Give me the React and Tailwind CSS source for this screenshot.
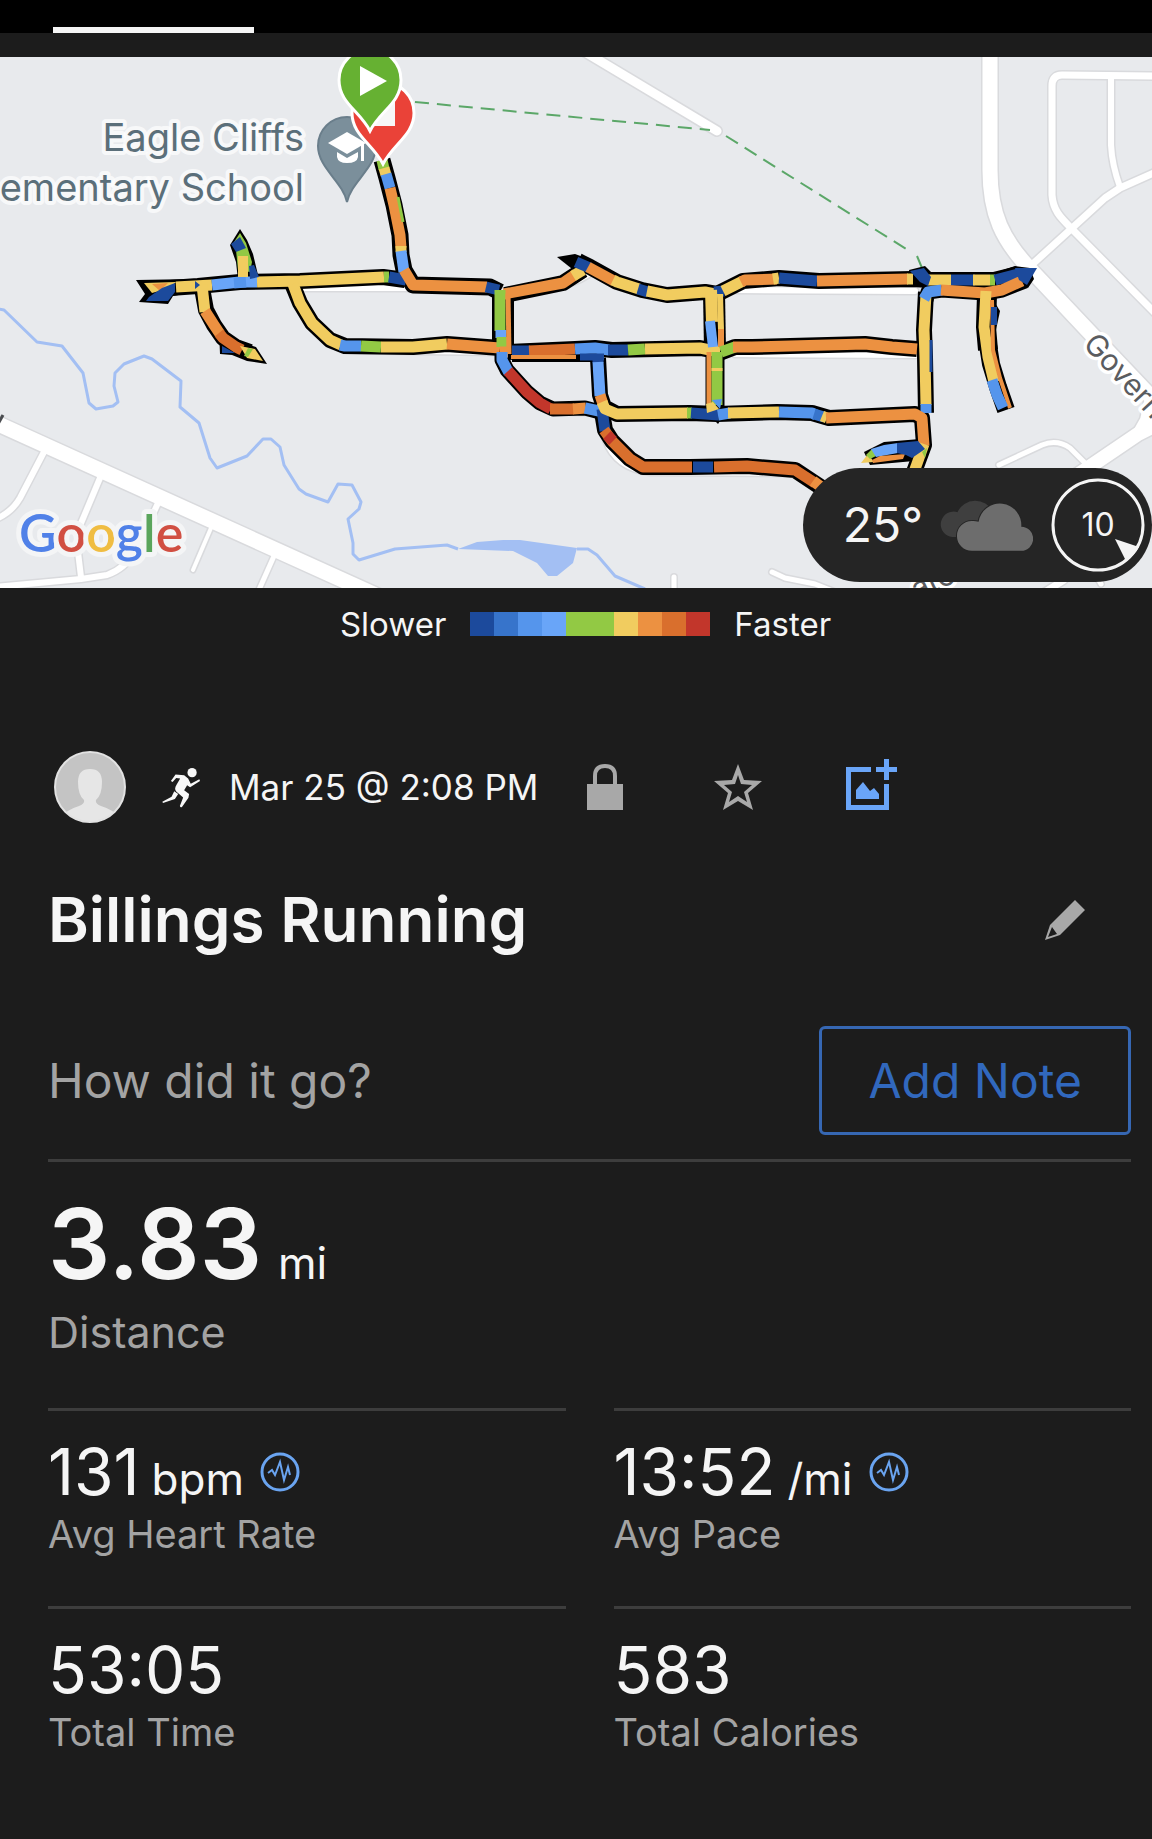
import React from "react";

const NAVY = "#1c4a9c";
const MID = "#3774cb";
const BLUE = "#5595ec";
const SKY = "#69a5f8";
const GREEN = "#92c944";
const YELLOW = "#f1cc5f";
const ORANGE = "#ec9141";
const RUST = "#d96f2d";
const RED = "#c2362b";

const LEGEND = [
  "bg-[#1c4a9c]",
  "bg-[#3774cb]",
  "bg-[#5595ec]",
  "bg-[#69a5f8]",
  "bg-[#92c944]",
  "bg-[#92c944]",
  "bg-[#f1cc5f]",
  "bg-[#ec9141]",
  "bg-[#d96f2d]",
  "bg-[#c2362b]",
];

/* Streets: [width, path] */
const ROADS = [
  [9, "M580 49 L717 131"],
  [15, "M990 50 L990 170 C990 215 1003 240 1029 268 L1095 338 L1156 402"],
  [7, "M1156 76 L1062 75 Q1052 75 1052 86 L1052 195 C1053 210 1060 217 1071 228 L1156 314"],
  [6, "M1111 78 L1111 145 Q1112 165 1120 187"],
  [7, "M1025 271 L1105 198 L1120 188 L1156 172"],
  [14, "M1156 425 L1138 434 L1085 470 L1040 500"],
  [10, "M1150 398 L1145 420 L1136 436"],
  [5, "M999 465 L1042 445 Q1057 439 1070 448 L1090 468"],
  [5, "M772 572 L785 578 L815 584 L835 592"],
  [7, "M1045 592 L1064 580"],
  [5, "M1096 575 L1101 584"],
  [5, "M674 577 L674 592"],
  [15, "M-4 423 L380 597"],
  [6, "M45 450 L20 498 Q12 512 -4 519"],
  [6, "M100 478 L79 528 Q77 540 78 552 L81 577"],
  [6, "M158 503 L148 525 L134 552 Q126 568 107 575 L81 579 L-4 587"],
  [4, "M211 528 L193 570"],
  [5, "M274 556 L258 592"],
  [6, "M298 288 L420 288 L500 291"],
  [6, "M560 287 L580 279 L594 271"],
  [6, "M735 290 L915 291"],
  [6, "M298 300 Q306 332 345 350 L500 352"],
  [6, "M735 354 L915 355"],
  [6, "M508 372 L535 402 Q548 413 590 412"],
  [6, "M606 440 Q616 468 650 472 L790 473"],
];

/* Black casing under the pace-coloured run: [width, path] */
const CASING = [
  [16, "M170 288 L198 286 L240 282 L300 281 L383 277 L405 280"],
  [16, "M202 288 L206 310 L214 325 L223 338 L236 347 L250 352"],
  [16, "M293 286 L300 303 L312 323 L330 340 L345 346 L413 347 L447 344 L500 348"],
  [17, "M382 160 L387 178 L394 205 L400 235 L401 255 L404 270 L413 285 L490 287 L500 292"],
  [22, "M503 290 L503 352"],
  [16, "M505 295 L563 283 L583 270"],
  [16, "M578 261 L590 267 L617 282 L642 290 L667 295 L705 292 L717 294 L743 281 L779 278 L819 281 L912 279 L930 280 L994 280 L1018 274"],
  [15, "M926 300 L928 292 L942 290 L985 293 L1002 290 L1025 281"],
  [16, "M926 292 L924 330 L925 357 L926 413"],
  [20, "M987 294 L986 327 L988 350"],
  [18, "M988 345 L991 364 L998 387 L1006 410"],
  [16, "M508 352 L575 349 L595 348 L612 350 L700 348 L722 352 L735 347 L752 347 L865 344 L892 347 L917 349"],
  [18, "M512 353 L600 353"],
  [22, "M714 292 L715 350"],
  [19, "M715 350 L715 412"],
  [15, "M502 350 L502 360 L507 370 L527 392 L540 403 L553 409 L585 408 L600 412"],
  [16, "M598 358 L600 395 L604 407 L617 414 L690 413 L717 414 L777 412 L812 413 L829 418 L915 414 L922 418 L924 445 L914 472"],
  [16, "M602 412 L605 430 L612 441 L630 459 L643 467 L690 467 L747 466 L795 470 L822 488"],
];

const CASING_SHAPES = [
  "M136 280 L195 279 L195 292 L173 296 L168 304 L139 302 L145 294 Z",
  "M240 229 L247 240 L253 254 L258 275 L238 280 L236 262 L230 245 Z",
  "M219 330 L220 354 L232 355 L247 361 L267 364 L256 347 L240 342 Z",
  "M557 257 L575 254 L586 258 L576 272 Z",
  "M909 270 L925 266 L934 275 L934 288 L912 285 Z",
  "M994 273 L1015 266 L1030 268 L1034 279 L1028 288 L1018 282 Z",
  "M992 298 L1000 311 L996 330 L985 325 Z",
  "M864 452 L884 442 L920 439 L926 449 L914 461 L870 465 Z",
  "M706 412 L718 424 L726 412 Z",
];

/* Pace-coloured stretches: [colour, path, width] */
const PACE = [
  [YELLOW, "M176 287 L212 285"],
  [SKY, "M212 285 L240 282 L257 282"],
  [BLUE, "M234 283 L246 282"],
  [YELLOW, "M257 282 L300 281 L384 277"],
  [GREEN, "M384 277 L389 277"],
  [NAVY, "M389 277 L406 280"],
  [YELLOW, "M202 285 L205 312"],
  [ORANGE, "M205 311 L214 325 L220 334"],
  [RUST, "M219 333 L223 338 L236 347 L242 350"],
  [YELLOW, "M293 284 L300 303 L312 323 L330 340 L341 345"],
  [BLUE, "M340 345 L345 346 L361 346"],
  [GREEN, "M361 346 L381 347"],
  [YELLOW, "M381 347 L413 347 L447 344"],
  [ORANGE, "M447 344 L500 348"],
  [GREEN, "M382 160 L384 169"],
  [YELLOW, "M384 168 L386 175"],
  [BLUE, "M386 174 L390 188"],
  [ORANGE, "M390 188 L394 205 L400 235 L401 248"],
  [YELLOW, "M401 246 L401 252"],
  [GREEN, "M398 197 L403 222", 3],
  [SKY, "M401 251 L404 272"],
  [ORANGE, "M404 270 L413 285 L487 287"],
  [NAVY, "M486 287 L499 290"],
  [ORANGE, "M504 294 L563 283 L576 274"],
  [YELLOW, "M573 276 L583 270"],
  [NAVY, "M576 262 L590 268"],
  [ORANGE, "M588 267 L614 281"],
  [YELLOW, "M613 280 L617 282 L639 289"],
  [NAVY, "M638 289 L648 292"],
  [YELLOW, "M647 291 L667 295 L705 292 L715 294"],
  [NAVY, "M714 292 L724 291"],
  [YELLOW, "M723 291 L743 281"],
  [ORANGE, "M741 282 L745 280 L777 279"],
  [YELLOW, "M773 279 L779 278"],
  [NAVY, "M779 278 L817 281"],
  [ORANGE, "M817 281 L908 279"],
  [YELLOW, "M907 279 L913 279"],
  [YELLOW, "M928 280 L951 280"],
  [NAVY, "M951 280 L975 280"],
  [YELLOW, "M973 280 L990 280"],
  [GREEN, "M990 280 L995 280"],
  [NAVY, "M995 280 L1018 274"],
  [YELLOW, "M926 294 L924 330 L925 357 L926 405"],
  [BLUE, "M924 299 L928 292 L942 290"],
  [ORANGE, "M941 290 L985 293 L1002 290 L1022 281"],
  [BLUE, "M926 404 L926 413"],
  [NAVY, "M931 340 L931 372", 3],
  [YELLOW, "M986 291 L984 327 L988 357 L994 382", 11],
  [ORANGE, "M992 300 L993 350 L1000 378 L1010 408", 4],
  [BLUE, "M992 380 L997 395 L1003 408", 11],
  [NAVY, "M994 307 L994 325", 6],
  [GREEN, "M500 290 L500 331", 11],
  [SKY, "M501 330 L501 338", 11],
  [GREEN, "M502 337 L502 347", 11],
  [ORANGE, "M508 294 L509 354", 5],
  [NAVY, "M512 351 L530 351"],
  [RUST, "M529 351 L575 349"],
  [BLUE, "M575 349 L595 348 L609 350"],
  [NAVY, "M608 350 L628 350"],
  [GREEN, "M628 350 L645 349"],
  [YELLOW, "M645 349 L700 348 L720 352"],
  [ORANGE, "M511 357 L576 357", 4],
  [NAVY, "M580 357 L604 357", 7],
  [YELLOW, "M711 290 L712 322", 12],
  [YELLOW, "M720 294 L721 330", 6],
  [SKY, "M710 321 L713 347", 10],
  [ORANGE, "M721 329 L721 347", 6],
  [ORANGE, "M709 352 L709 404", 5],
  [GREEN, "M717 352 L717 405", 11],
  [YELLOW, "M717 368 L717 371", 11],
  [GREEN, "M721 352 L735 347"],
  [ORANGE, "M733 347 L752 347 L865 344 L892 347 L917 349"],
  [ORANGE, "M500 352 L508 352", 11],
  [BLUE, "M502 352 L502 360 L509 373"],
  [RED, "M508 371 L527 392 L540 403 L551 409"],
  [RUST, "M550 409 L574 409"],
  [ORANGE, "M573 409 L586 408"],
  [BLUE, "M585 408 L599 411"],
  [NAVY, "M598 355 L598 363"],
  [SKY, "M598 362 L600 396"],
  [ORANGE, "M600 395 L603 404"],
  [NAVY, "M602 409 L605 431"],
  [YELLOW, "M602 402 L605 409 L617 414 L688 413"],
  [GREEN, "M687 413 L692 413"],
  [NAVY, "M691 413 L719 415"],
  [BLUE, "M718 415 L730 413"],
  [YELLOW, "M728 413 L779 412"],
  [BLUE, "M779 412 L812 413 L816 415"],
  [MID, "M814 414 L824 417"],
  [YELLOW, "M822 416 L827 418"],
  [ORANGE, "M826 418 L915 414 L922 418 L924 446"],
  [YELLOW, "M924 444 L914 472"],
  [RUST, "M604 430 L612 441 L630 459 L643 467 L692 467"],
  [RED, "M607 435 L613 441"],
  [NAVY, "M693 467 L713 467"],
  [RUST, "M714 467 L747 466 L795 470 L815 483"],
  [ORANGE, "M813 481 L824 489"],
];

const PACE_SHAPES = [
  [YELLOW, "M144 283 L176 282 L170 288 L152 293 Z"],
  [ORANGE, "M152 284 L168 283 L160 291 Z"],
  [NAVY, "M149 297 L162 288 L175 283 L175 292 L168 301 L146 301 Z"],
  [NAVY, "M195 281 L200 285 L195 289 Z"],
  [GREEN, "M240 233 L246 243 L252 262 L250 272 L238 270 L236 250 L234 242 Z"],
  [NAVY, "M231 244 L240 237 L246 248 L236 252 Z"],
  [YELLOW, "M238 256 L248 256 L248 277 L238 277 Z"],
  [NAVY, "M249 266 L254 265 L259 277 L250 279 Z"],
  [NAVY, "M222 346 L235 353 L222 353 Z"],
  [YELLOW, "M240 346 L255 349 L263 361 L247 358 Z"],
  [GREEN, "M248 348 L253 349 L248 357 L244 356 Z"],
  [NAVY, "M910 271 L924 268 L931 277 L928 286 L920 282 Z"],
  [NAVY, "M1015 268 L1037 268 L1027 285 L1019 280 Z"],
  [YELLOW, "M861 463 L868 454 L874 462 Z"],
  [GREEN, "M866 455 L872 449 L876 456 L870 459 Z"],
  [SKY, "M871 449 L884 445 L898 443 L898 453 L876 457 Z"],
  [ORANGE, "M872 460 L880 456 L905 454 L903 459 L873 463 Z"],
  [NAVY, "M897 443 L918 441 L925 449 L912 458 L906 455 L897 453 Z"],
  [GREEN, "M922 452 L927 448 L925 458 Z"],
  [YELLOW, "M706 404 L713 402 L719 409 L707 413 Z"],
  [BLUE, "M712 400 L722 399 L720 409 Z"],
];

function RouteMap() {
  return (
    <svg
      viewBox="0 57 1152 531"
      className="block h-auto w-full bg-[#e8eaed]"
      role="img"
      aria-label="Map of the run coloured by pace"
      fill="none"
    >
      <path
        d="M-2 309 L4 310 L37 342 L62 346 L83 373 L89 403 L96 409 L113 406 L118 402 L114 386 L115 373 L124 364 L144 356 L152 359 L181 381 L180 407 L199 423 L210 458 L217 468 L247 456 L263 439 L271 439 L280 447 L284 465 L299 489 L306 494 L328 502 L338 484 L352 485 L361 502 L359 509 L348 519 L353 543 L353 554 L359 560 L395 549 L447 545 L458 549 M577 549 L588 549 L597 555 L615 576 L645 589"
        stroke="#a3bff3"
        strokeWidth="3"
        strokeLinejoin="round"
      />
      <path
        d="M458 549 L477 542 L503 540 L520 540 L577 548 L573 563 L557 576 L548 576 L537 563 L513 551 Z"
        fill="#a3bff3"
      />
      <g stroke="#d9dadd" strokeLinecap="round" strokeLinejoin="round">
        {ROADS.map(([w, d]) => (
          <path key={d} d={d} strokeWidth={w + 3} />
        ))}
      </g>
      <g stroke="#ffffff" strokeLinecap="round" strokeLinejoin="round">
        {ROADS.map(([w, d]) => (
          <path key={d} d={d} strokeWidth={w} />
        ))}
      </g>
      <g stroke="#5ba768" strokeWidth="2" strokeDasharray="14 8">
        <path d="M415 102 L710 130" />
        <path d="M726 136 L911 252" />
        <path d="M917 256 L922 268" />
      </g>

      <g
        fontFamily="Inter, sans-serif"
        strokeLinejoin="round"
        stroke="#ffffff"
        paintOrder="stroke"
      >
        <g fontSize="38" fill="#5b6f7a" strokeWidth="8" strokeOpacity="0.7" textAnchor="end">
          <text x="304" y="151">Eagle Cliffs</text>
          <text x="304" y="201">ementary School</text>
        </g>
        <g fontSize="30" fill="#5a5c60" strokeWidth="7">
          <text transform="translate(1082 345) rotate(47)">Governors Blvd</text>
          <text transform="translate(917 600) rotate(-25)">ate</text>
        </g>
        <path d="M-2 424 L3 415" stroke="#4a4c50" strokeWidth="3" />
      </g>

      <g
        fontFamily="Lato, sans-serif"
        fontSize="52"
        fontWeight="600"
        stroke="#f4f5f6"
        strokeWidth="10"
        strokeLinejoin="round"
        paintOrder="stroke"
      >
        <text x="19" y="552">
          <tspan fill="#5081e8">G</tspan>
          <tspan fill="#d14f42">o</tspan>
          <tspan fill="#f0bd42">o</tspan>
          <tspan fill="#5081e8">g</tspan>
          <tspan fill="#5aa55c">l</tspan>
          <tspan fill="#d14f42">e</tspan>
        </text>
      </g>

      <path
        d="M347 202 C343 182 318 168 318 146 A29 29 0 0 1 376 146 C376 168 351 182 347 202 Z"
        fill="#7b8f9b"
        stroke="#6a7e8b"
        strokeWidth="2"
      />
      <g fill="#ffffff">
        <path d="M328 143 L347 132 L366 143 L347 154 Z" />
        <path d="M337 152 L347 158 L358 152 V157 Q357 163 347 163 Q338 163 337 157 Z" />
        <path d="M361 144 H364 V161 H361 Z" />
      </g>

      <g stroke="#000000" strokeLinejoin="round">
        {CASING.map(([w, d]) => (
          <path key={d} d={d} strokeWidth={w} />
        ))}
      </g>
      <g fill="#000000">
        {CASING_SHAPES.map((d) => (
          <path key={d} d={d} />
        ))}
      </g>
      <g strokeLinejoin="round">
        {PACE.map(([color, d, w = 11]) => (
          <path key={d} d={d} stroke={color} strokeWidth={w} />
        ))}
      </g>
      {PACE_SHAPES.map(([color, d]) => (
        <path key={d} d={d} fill={color} />
      ))}

      <path
        d="M383 164 C373 144 352 135 352 113 A31 31 0 0 1 414 113 C414 135 393 144 383 164 Z"
        fill="#ea4238"
        stroke="#ffffff"
        strokeWidth="3"
      />
      <path d="M370 99 H395 V126 H370 Z" fill="#f7f7f7" />
      <path
        d="M370 131 C360 111 339 103 339 80 A31 31 0 0 1 401 80 C401 103 380 111 370 131 Z"
        fill="#66b132"
        stroke="#ffffff"
        strokeWidth="3"
      />
      <path d="M360 66 L387 81 L360 96 Z" fill="#ffffff" />
    </svg>
  );
}

function WeatherPill() {
  return (
    <div className="absolute right-0 bottom-[6px] flex h-[114px] items-center rounded-full bg-[#252525] pr-[7px] pl-10 text-[#f5f5f5]">
      <span className="text-[48px] leading-none">25°</span>
      <svg viewBox="0 0 280 160" className="ml-4 h-[54px] w-[94px]" aria-hidden="true">
        <path
          d="M40 116 A38 38 0 1 1 55 42 A58 58 0 0 1 160 40 L130 116 Z"
          fill="#3f3f3f"
        />
        <path
          d="M98 157 A44 44 0 0 1 98 68 Q106 67 118 70 A64 64 0 0 1 245 85 A36 36 0 0 1 244 157 Z"
          fill="#6d6d6d"
          stroke="#252525"
          strokeWidth="6"
          paintOrder="stroke"
        />
      </svg>
      <div className="relative ml-[18px] flex size-[94px] items-center justify-center">
        <svg viewBox="0 0 94 94" className="absolute inset-0 size-full" aria-hidden="true">
          <circle cx="47" cy="47" r="45" fill="none" stroke="#f5f5f5" strokeWidth="3" />
          <path d="M64 61 L88 69 Q83 78 75 83 Z" fill="#f5f5f5" />
        </svg>
        <span className="text-[32px] leading-none">10</span>
      </div>
    </div>
  );
}

function PulseIcon() {
  return (
    <svg viewBox="0 0 40 40" className="size-10" fill="none" stroke="#6aa4f0" aria-hidden="true">
      <circle cx="20" cy="20" r="18" strokeWidth="3" />
      <path d="M8 21 L12 18 L15 23 L20 10 L24 28 L28 15 L30 23" strokeWidth="2" />
    </svg>
  );
}

function Stat({ value, unit, label, pulse }) {
  return (
    <div className="border-t-3 border-[#3d3d3d] pt-[25px] pb-[46px]">
      <dd className="flex h-[72px] items-center text-[64px] leading-[72px] text-[#f5f5f5]">
        <span>
          {value}
          {unit && <span className="ml-3 text-[44px] leading-none">{unit}</span>}
        </span>
        {pulse && (
          <button type="button" aria-label={"Show chart for " + label} className="ml-4">
            <PulseIcon />
          </button>
        )}
      </dd>
      <dt className="text-[38px] leading-[52px] text-[#a3a3a3]">{label}</dt>
    </div>
  );
}

function RunnerIcon() {
  return (
    <svg viewBox="395 108 118 124" className="h-[41px] w-[39px]" fill="#f8f8f8" role="img" aria-label="Running">
      <circle cx="486" cy="125" r="14" />
      <path d="M422 150 L436 131 L462 133 L474 143 L482 159 L508 145 L510 150 L480 169 L471 163 L462 178 L477 190 L475 201 L456 228 Q451 232 449 226 L459 200 L438 182 Q431 174 439 162 L450 143 L438 141 L427 153 Z" />
      <path d="M432 181 L444 190 L434 205 L398 217 L396 213 L424 198 Z" />
    </svg>
  );
}

export default function App() {
  return (
    <div className="min-h-screen bg-[#1c1c1c] pb-8 font-['Inter',sans-serif] text-[#f5f5f5]">
      <div className="flex h-[33px] items-end bg-black pl-[53px]">
        <div className="h-[6px] w-[201px] bg-[#f5f5f5]" />
      </div>

      <section className="relative mt-6 overflow-hidden">
        <RouteMap />
        <WeatherPill />
      </section>

      <main className="pr-[21px] pl-12">
        <div className="flex items-center justify-center gap-6 pt-3 pr-2 text-[33px] leading-[48px]">
          <span>Slower</span>
          <div className="flex h-6">
            {LEGEND.map((c, i) => (
              <div key={i} className={"w-6 " + c} />
            ))}
          </div>
          <span>Faster</span>
        </div>

        <header className="mt-[103px] flex items-center pl-[6px]">
          <svg viewBox="0 0 72 72" className="size-[72px]" role="img" aria-label="Profile picture">
            <defs>
              <clipPath id="avatar">
                <circle cx="36" cy="36" r="35" />
              </clipPath>
            </defs>
            <g clipPath="url(#avatar)">
              <path d="M0 0 H72 V72 H0 Z" fill="#c4c4c4" />
              <path
                d="M24 31 Q24 18 36 18 Q48 18 48 31 Q48 44 42 49 Q41 53 47 55 Q60 59 64 66 V74 H8 V66 Q12 59 25 55 Q31 53 30 49 Q24 44 24 31 Z"
                fill="#e6e6e6"
              />
            </g>
            <circle cx="36" cy="36" r="35" fill="none" stroke="#e2e2e2" strokeWidth="2" />
          </svg>
          <span className="ml-9">
            <RunnerIcon />
          </span>
          <time className="ml-7 text-[35px] leading-[48px]">Mar 25 @ 2:08 PM</time>
          <div className="ml-[42px] flex items-center gap-[83px]">
            <button type="button" aria-label="Privacy" className="size-[50px]">
              <svg viewBox="0 0 50 50" className="size-full" aria-hidden="true">
                <path d="M7 22 H43 V48 H7 Z" fill="#a8a8a8" />
                <path d="M15 23 V14 Q15 4 25 4 Q35 4 35 14 V23" fill="none" stroke="#a8a8a8" strokeWidth="4" />
              </svg>
            </button>
            <button type="button" aria-label="Favorite" className="size-[50px]">
              <svg viewBox="0 0 50 50" className="size-full" aria-hidden="true">
                <path
                  fillRule="evenodd"
                  fill="#a8a8a8"
                  d="M25 2 L31 18 L49 19 L35 31 L40 48 L25 39 L10 48 L15 31 L1 19 L19 18 Z M25 13 L22 22 L11 23 L19 30 L16 40 L25 34 L34 40 L31 30 L39 23 L28 22 Z"
                />
              </svg>
            </button>
            <button type="button" aria-label="Add photo" className="flex h-14 w-[51px] items-start">
              <svg viewBox="0 0 51 51" className="size-[51px]" fill="#6aa5f8" aria-hidden="true">
                <path d="M0 8 H25 V13 H5 V46 H38 V25 H43 V51 H0 Z" />
                <path d="M38 0 H43 V8 H51 V13 H43 V21 H38 V13 H30 V8 H38 Z" />
                <path d="M10 40 V31 L17 23 L24 32 L28 29 L33 35 V40 Z" />
              </svg>
            </button>
          </div>
        </header>

        <div className="mt-[57px] flex items-center justify-between pr-[46px]">
          <h1 className="text-[62px] leading-[80px] font-semibold">Billings Running</h1>
          <button type="button" aria-label="Edit name" className="size-10">
            <svg viewBox="0 0 40 40" className="size-full" fill="#a8a8a8" aria-hidden="true">
              <path
                fillRule="evenodd"
                d="M30 0 L40 10 L15 35 L0 40 L5 25 Z M7 27 L3 37 L12 34 Z"
              />
            </svg>
          </button>
        </div>

        <div className="mt-[66px] mb-6 flex items-center justify-between">
          <p className="text-[48px] leading-[64px] text-[#a3a3a3]">How did it go?</p>
          <button
            type="button"
            className="h-[109px] rounded-md border-3 border-[#3667b3] px-[46px] text-[48px] leading-[64px] text-[#3168bd]"
          >
            Add Note
          </button>
        </div>

        <dl>
          <div className="border-t-3 border-[#3d3d3d] pt-[26px] pb-11">
            <dd className="text-[98px] leading-[112px] font-semibold">
              3.83<span className="ml-4 text-[44px] leading-none font-normal">mi</span>
            </dd>
            <dt className="text-[43px] leading-[64px] text-[#a3a3a3]">Distance</dt>
          </div>
          <div className="grid grid-cols-2 gap-x-12">
            <Stat value="131" unit="bpm" label="Avg Heart Rate" pulse />
            <Stat value="13:52" unit="/mi" label="Avg Pace" pulse />
            <Stat value="53:05" label="Total Time" />
            <Stat value="583" label="Total Calories" />
          </div>
        </dl>
      </main>
    </div>
  );
}
